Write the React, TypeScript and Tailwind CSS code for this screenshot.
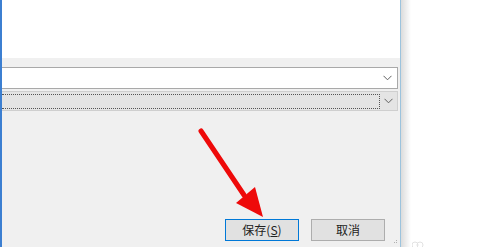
import React from "react";

const Chevron = () => (
  <svg width="9" height="6" viewBox="0 0 9 6" className="shrink-0">
    <path d="M0.5 0.8 L4.5 4.8 L8.5 0.8" fill="none" stroke="#606060" strokeWidth="1" />
  </svg>
);

export default function App() {
  return (
    <div
      className="relative flex h-[247px] w-[489px] overflow-hidden bg-white"
      style={{ fontFamily: '"Noto Sans CJK SC", "Liberation Sans", sans-serif' }}
    >
      {/* dialog */}
      <div className="flex h-full w-[401px] shrink-0 flex-col border-l-2 border-r border-l-[#3c7fd1] border-r-[#9cc3dd] bg-[#f0f0f0]">
        <div className="h-[58px] bg-white" />
        <div className="flex flex-col gap-[2px] pr-[2px] pt-[9px]">
          <div className="flex h-[22px] items-center justify-end border border-l-0 border-[#a9a9a9] bg-white pr-[5px]">
            <Chevron />
          </div>
          <div className="flex h-[20px] items-center border border-l-0 border-[#cfcfcf] bg-[#e4e4e4]">
            <div className="h-[15px] flex-1 border border-l-0 border-dotted border-[#555]" />
            <div className="flex w-[17px] justify-center">
              <Chevron />
            </div>
          </div>
        </div>
        <div className="flex-1" />
        <div className="flex gap-[12px] pb-[6px] pl-[223px]">
          <button className="flex h-[22px] w-[74px] items-center justify-center border border-[#0078d7] bg-[#e1e1e1] text-[12px] text-[#222]">
            保存(<span className="underline">S</span>)
          </button>
          <button className="flex h-[22px] w-[74px] items-center justify-center border border-[#adadad] bg-[#e1e1e1] text-[12px] text-[#222]">
            取消
          </button>
        </div>
      </div>
      {/* shadow */}
      <div className="h-full w-[10px] bg-gradient-to-r from-[#dcdcdc] to-white" />
      <div className="flex-1" />

      {/* arrow */}
      <svg className="absolute left-0 top-0" width="489" height="247">
        <line x1="201" y1="131" x2="244" y2="195" stroke="#ee0a0a" strokeWidth="5" strokeLinecap="round" />
        <polygon points="236,203 255,187 263,217" fill="#ee0a0a" />
      </svg>

      {/* resize grip */}
      <svg className="absolute left-[392px] top-[240px]" width="6" height="6">
        <rect x="4" y="0" width="1" height="1" fill="#b0b0b0" />
        <rect x="2" y="2" width="1" height="1" fill="#b0b0b0" />
        <rect x="4" y="2" width="1" height="1" fill="#b0b0b0" />
      </svg>
      <svg className="absolute left-[412px] top-[240px]" width="12" height="7">
        <circle cx="3" cy="5" r="3" fill="none" stroke="#e2e2e2" />
        <circle cx="8" cy="5" r="3" fill="none" stroke="#e2e2e2" />
      </svg>
    </div>
  );
}
